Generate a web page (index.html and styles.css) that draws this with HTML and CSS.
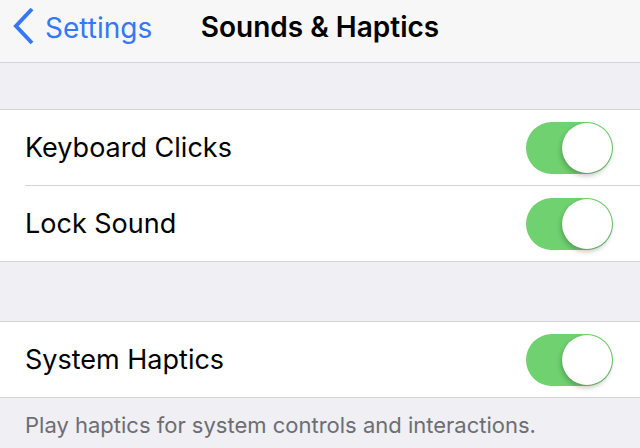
FILE: index.html
```html
<!DOCTYPE html>
<html lang="en">
  <head>
    <meta charset="UTF-8" />
    <meta name="viewport" content="width=device-width, initial-scale=1.0" />
    <title>Sounds &amp; Haptics</title>
    <link rel="stylesheet" href="styles.css">
  </head>
  <body>
    <div class="navbar">
      <a class="back" href="#">
        <svg class="chevron" width="24" height="38" viewBox="0 0 24 38">
          <path d="M21 2 L5 19 L21 36" fill="none" stroke="#3478f6" stroke-width="4" stroke-linecap="butt" stroke-linejoin="miter" />
        </svg>
        <span>Settings</span>
      </a>
      <div class="title">Sounds &amp; Haptics</div>
    </div>

    <div class="spacer spacer-top"></div>

    <div class="group">
      <div class="row">
        <span class="label">Keyboard Clicks</span>
        <span class="switch on"><span class="knob"></span></span>
      </div>
      <div class="row">
        <span class="label">Lock Sound</span>
        <span class="switch on"><span class="knob"></span></span>
      </div>
    </div>

    <div class="spacer spacer-mid"></div>

    <div class="group">
      <div class="row">
        <span class="label">System Haptics</span>
        <span class="switch on"><span class="knob"></span></span>
      </div>
    </div>

    <p class="footnote">Play haptics for system controls and interactions.</p>
  </body>
</html>
```

FILE: styles.css
```css
html, body {
  margin: 0;
  padding: 0;
}
body {
  width: 640px;
  height: 448px;
  overflow: hidden;
  background: #efeff4;
  font-family: Inter, "Liberation Sans", sans-serif;
  color: #000;
}
.navbar {
  position: relative;
  height: 62px;
  background: #f7f7f7;
  border-bottom: 1px solid #d4d4d8;
  display: flex;
  align-items: center;
  justify-content: center;
}
.back {
  position: absolute;
  left: 11px;
  top: 7px;
  display: flex;
  align-items: center;
  gap: 10px;
  color: #3478f6;
  text-decoration: none;
  font-size: 28px;
}
.back span {
  padding-top: 4px;
}
.title {
  font-size: 28px;
  font-weight: 600;
  padding-bottom: 8px;
}
.spacer-top {
  height: 46px;
}
.spacer-mid {
  height: 59px;
}
.group {
  background: #fff;
  border-top: 1px solid #d4d4d8;
  border-bottom: 1px solid #d4d4d8;
}
.row {
  height: 75px;
  display: flex;
  align-items: center;
  justify-content: space-between;
  padding-left: 25px;
  padding-right: 27px;
  position: relative;
}
.row + .row {
  border-top: 1px solid #d4d4d8;
  margin-left: 25px;
  padding-left: 0;
}
.label {
  font-size: 27px;
}
.switch {
  width: 87px;
  height: 52px;
  border-radius: 26px;
  background: #6fd16f;
  position: relative;
  display: block;
}
.knob {
  position: absolute;
  top: 1px;
  right: 1px;
  width: 50px;
  height: 50px;
  border-radius: 50%;
  background: #fff;
  box-shadow: -1px 3px 5px rgba(0, 0, 0, 0.22), 0 0 0 0.5px rgba(0, 0, 0, 0.05);
}
.footnote {
  margin: 0;
  padding: 14px 25px 0;
  font-size: 22px;
  color: #6d6d72;
}
```
